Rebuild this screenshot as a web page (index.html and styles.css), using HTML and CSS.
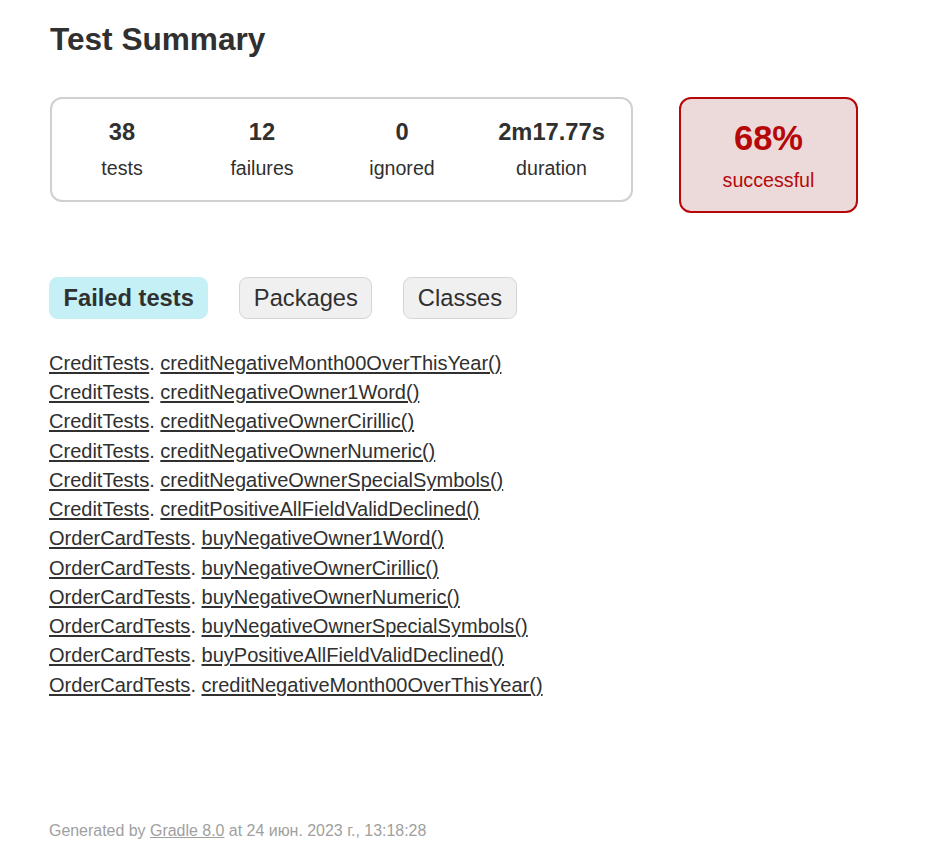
FILE: index.html
```html
<!DOCTYPE html>
<html>
<head>
<meta charset="utf-8">
<title>Test results - Test Summary</title>
<link rel="stylesheet" href="styles.css">
</head>
<body>
<div class="content">
  <h1 class="title">Test Summary</h1>
  <div class="summary">
    <div class="summary-group">
      <div class="info-box">
        <div class="counter">38</div>
        <p class="label">tests</p>
      </div>
      <div class="info-box">
        <div class="counter">12</div>
        <p class="label">failures</p>
      </div>
      <div class="info-box">
        <div class="counter">0</div>
        <p class="label">ignored</p>
      </div>
      <div class="info-box duration">
        <div class="counter">2m17.77s</div>
        <p class="label">duration</p>
      </div>
    </div>
    <div class="success-rate">
      <div class="percent">68%</div>
      <p class="rate-label">successful</p>
    </div>
  </div>
  <ul class="tab-links">
    <li class="tab selected"><h2 class="tab-title">Failed tests</h2></li>
    <li class="tab"><a class="tab-link" href="#">Packages</a></li>
    <li class="tab"><a class="tab-link" href="#">Classes</a></li>
  </ul>
  <ul class="link-list">
    <li class="link-item"><a href="#">CreditTests</a>. <a href="#">creditNegativeMonth00OverThisYear()</a></li>
    <li class="link-item"><a href="#">CreditTests</a>. <a href="#">creditNegativeOwner1Word()</a></li>
    <li class="link-item"><a href="#">CreditTests</a>. <a href="#">creditNegativeOwnerCirillic()</a></li>
    <li class="link-item"><a href="#">CreditTests</a>. <a href="#">creditNegativeOwnerNumeric()</a></li>
    <li class="link-item"><a href="#">CreditTests</a>. <a href="#">creditNegativeOwnerSpecialSymbols()</a></li>
    <li class="link-item"><a href="#">CreditTests</a>. <a href="#">creditPositiveAllFieldValidDeclined()</a></li>
    <li class="link-item"><a href="#">OrderCardTests</a>. <a href="#">buyNegativeOwner1Word()</a></li>
    <li class="link-item"><a href="#">OrderCardTests</a>. <a href="#">buyNegativeOwnerCirillic()</a></li>
    <li class="link-item"><a href="#">OrderCardTests</a>. <a href="#">buyNegativeOwnerNumeric()</a></li>
    <li class="link-item"><a href="#">OrderCardTests</a>. <a href="#">buyNegativeOwnerSpecialSymbols()</a></li>
    <li class="link-item"><a href="#">OrderCardTests</a>. <a href="#">buyPositiveAllFieldValidDeclined()</a></li>
    <li class="link-item"><a href="#">OrderCardTests</a>. <a href="#">creditNegativeMonth00OverThisYear()</a></li>
  </ul>
  <div class="footer">
    <p class="footer-text">Generated by <a href="#">Gradle 8.0</a> at 24 июн. 2023 г., 13:18:28</p>
  </div>
</div>
</body>
</html>
```

FILE: styles.css
```css
html, body {
  margin: 0;
  padding: 0;
  background: #ffffff;
}

body {
  font-family: "Liberation Sans", Arial, sans-serif;
  font-size: 19.2px;
  color: #303030;
}

a, a:visited {
  color: #303030;
}

.content {
  padding: 22.4px 50px 0 49px;
}

.title {
  margin: 0 0 0 1px;
  font-size: 31.6px;
  line-height: 35.3px;
  font-weight: bold;
  white-space: nowrap;
}

.summary {
  display: flex;
  align-items: flex-start;
  margin-top: 39.3px;
  margin-left: 1px;
}

.summary-group {
  display: flex;
  box-sizing: border-box;
  width: 583px;
  border: solid 2px #d0d0d0;
  border-radius: 12px;
}

.info-box {
  width: 140px;
  padding: 22.4px 0 21.3px;
  text-align: center;
}

.info-box.duration {
  width: 159px;
}

.counter {
  font-size: 23.7px;
  line-height: 23.9px;
  font-weight: bold;
  margin-bottom: 13.5px;
}

.label {
  margin: 0;
  font-size: 19.6px;
  line-height: 19.9px;
}

.success-rate {
  box-sizing: border-box;
  width: 179px;
  margin-left: 46px;
  padding: 20.2px 0 20.3px;
  text-align: center;
  border: solid 2px #b60808;
  border-radius: 12px;
  background-color: #ecdada;
  color: #b60808;
}

.percent {
  font-size: 34.56px;
  line-height: 39.7px;
  font-weight: bold;
  margin-bottom: 9.7px;
}

.rate-label {
  margin: 0;
  font-size: 19.7px;
  line-height: 22.07px;
}

.tab-links {
  display: flex;
  gap: 31px;
  list-style: none;
  margin: 64px 0 0;
  padding: 0;
}

.tab {
  padding: 6.75px 13.5px;
  border: solid 1px #d4d4d4;
  border-radius: 8.4px;
  background-color: #f0f0f0;
  font-size: 23.7px;
  line-height: 26.5px;
}

.tab.selected {
  background-color: #c5f0f5;
  border-color: #c5f0f5;
}

.tab-title {
  margin: 0;
  padding: 0;
  font-size: 23.7px;
  line-height: 26.5px;
  font-weight: bold;
}

.tab-link {
  display: block;
  text-decoration: none;
}

.link-list {
  display: flex;
  flex-direction: column;
  gap: 7.2px;
  list-style: none;
  margin: 33px 0 0;
  padding: 0;
}

.link-item {
  font-size: 20.04px;
  line-height: 22.07px;
  white-space: nowrap;
}

.footer {
  margin-top: 125.8px;
  padding-bottom: 20px;
}

.footer-text {
  margin: 0;
  font-size: 15.95px;
  line-height: 17.6px;
  white-space: nowrap;
}

.footer-text, .footer-text a {
  color: #a0a0a0;
}
```
